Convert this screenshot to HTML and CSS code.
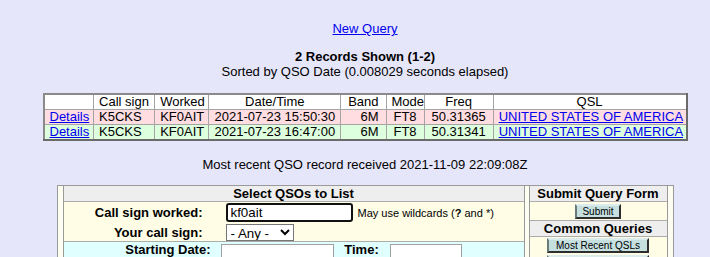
FILE: index.html
```html
<!DOCTYPE html>
<html lang="en">

<head>
    <title>QSL Query Results</title>

    <link rel="stylesheet" href="styles.css">
</head>

<body>
    <div class="page">
        <p class="new-query"><a href="#">New Query</a></p>

        <p class="summary">
            <b>2 Records Shown (1-2)</b><br>
            Sorted by QSO Date (0.008029 seconds elapsed)
        </p>

        <table class="results">
            <colgroup>
                <col class="c-details">
                <col class="c-call">
                <col class="c-worked">
                <col class="c-date">
                <col class="c-band">
                <col class="c-mode">
                <col class="c-freq">
                <col class="c-qsl">
            </colgroup>
            <tr class="head">
                <td></td>
                <td>Call sign</td>
                <td>Worked</td>
                <td class="center">Date/Time</td>
                <td class="right">Band</td>
                <td class="center">Mode</td>
                <td class="center">Freq</td>
                <td class="center">QSL</td>
            </tr>
            <tr class="odd">
                <td><a href="#">Details</a></td>
                <td>K5CKS</td>
                <td>KF0AIT</td>
                <td class="center">2021-07-23 15:50:30</td>
                <td class="right">6M</td>
                <td class="center">FT8</td>
                <td class="center">50.31365</td>
                <td><a href="#">UNITED STATES OF AMERICA</a></td>
            </tr>
            <tr class="even">
                <td><a href="#">Details</a></td>
                <td>K5CKS</td>
                <td>KF0AIT</td>
                <td class="center">2021-07-23 16:47:00</td>
                <td class="right">6M</td>
                <td class="center">FT8</td>
                <td class="center">50.31341</td>
                <td><a href="#">UNITED STATES OF AMERICA</a></td>
            </tr>
        </table>

        <p class="recent">Most recent QSO record received 2021-11-09 22:09:08Z</p>

        <form class="query" onsubmit="return false">
            <div class="panel main">
                <div class="panel-head">Select QSOs to List</div>
                <div class="fields">
                    <label class="lbl">Call sign worked:</label>
                    <div class="ctl">
                        <input type="text" class="call-input" value="kf0ait">
                        <span class="hint">May use wildcards (<b>?</b> and *)</span>
                    </div>
                    <label class="lbl">Your call sign:</label>
                    <div class="ctl">
                        <select class="mycall">
                            <option>- Any -</option>
                        </select>
                    </div>
                </div>
                <div class="dates">
                    <label class="lbl">Starting Date:</label>
                    <input type="text" class="date-input">
                    <label class="time-lbl">Time:</label>
                    <input type="text" class="time-input">
                    <span></span>
                </div>
            </div>

            <div class="panel side">
                <div class="panel-head">Submit Query Form</div>
                <div class="btn-row">
                    <button>Submit</button>
                </div>
                <div class="panel-head second">Common Queries</div>
                <div class="btn-row stack">
                    <button>Most Recent QSLs</button>
                    <button class="next"></button>
                </div>
            </div>
        </form>
    </div>
</body>
</html>
```

FILE: styles.css
```css
html,
body {
    margin: 0;
    padding: 0;
    overflow: hidden;
}

body {
    background-color: #e6e6fa;
    color: black;
    font-family: "Liberation Sans", Arial, sans-serif;
    font-size: 13px;
}

a {
    color: #0000ee;
}

.page {
    width: 690px;
    margin-left: 20px;
    text-align: center;
}

.new-query,
.summary,
.recent {
    line-height: 15px;
}

.new-query {
    margin: 21px 0 0 0;
}

.summary {
    margin: 13px 0 0 0;
}

.recent {
    margin: 16px 0 0 0;
}

/* results table */
.results {
    margin: 14px auto 0 auto;
    width: 645px;
    table-layout: fixed;
    border-collapse: collapse;
    border: 2px solid #8a8a8a;
    border-right-color: #6a6a6a;
    border-bottom-color: #6a6a6a;
    text-align: left;
    line-height: 14px;
}

.results td {
    border: 1px solid #a4a4a4;
    padding: 0 5px;
    white-space: nowrap;
    overflow: hidden;
}

.results .center {
    text-align: center;
}

.results .right {
    text-align: right;
    padding-right: 7px;
}

.c-details { width: 50px; }
.c-call { width: 61px; }
.c-worked { width: 54px; }
.c-date { width: 132px; }
.c-band { width: 45px; }
.c-mode { width: 38px; }
.c-freq { width: 69px; }
.c-qsl { width: 193px; }

.head { background-color: white; }
.odd { background-color: #ffdde0; }
.even { background-color: #ddffdd; }

/* query form */
.query {
    display: flex;
    gap: 4px;
    width: fit-content;
    margin: 13px auto 0 auto;
    padding: 0 5px;
    border: 1px solid #9a9a9a;
    background-color: #fdfdf2;
    text-align: left;
}

.panel {
    border-left: 1px solid #9a9a9a;
    border-right: 1px solid #9a9a9a;
    background-color: #fffde6;
}

.main {
    width: 460px;
}

.side {
    width: 137px;
}

.panel-head {
    background-color: #eeeeee;
    border-bottom: 1px solid #acacac;
    font-weight: bold;
    text-align: center;
    line-height: 15px;
}

.panel-head.second {
    border-top: 1px solid #acacac;
}

.fields {
    display: grid;
    grid-template-columns: 162px auto;
    row-gap: 2px;
    align-items: center;
    padding: 1px 0 0 0;
}

.lbl {
    font-weight: bold;
    text-align: right;
    padding-right: 23px;
}

.ctl {
    display: flex;
    align-items: center;
    gap: 5px;
}

.call-input {
    box-sizing: border-box;
    width: 127px;
    height: 19px;
    margin: 0;
    padding: 0 3px;
    border: 2px solid #111;
    border-radius: 3px;
    font-family: "Liberation Sans", Arial, sans-serif;
    font-size: 13.33px;
    outline: none;
}

.hint {
    font-size: 11px;
}

.mycall {
    box-sizing: border-box;
    width: 68px;
    height: 17px;
    margin: 0;
    padding: 0;
    border: 1px solid #767676;
    border-radius: 0;
    background-color: white;
    font-family: "Liberation Sans", Arial, sans-serif;
    font-size: 13.33px;
}

.dates {
    display: grid;
    grid-template-columns: 157px 113px 56px 72px 1fr;
    align-items: start;
    padding: 0 0 2px 0;
    border-top: 1px solid #acacac;
    background-color: #e0ffff;
    line-height: 15px;
}

.dates .lbl {
    padding-right: 10px;
}

.time-lbl {
    font-weight: bold;
    text-align: center;
}

.date-input,
.time-input {
    box-sizing: border-box;
    height: 20px;
    margin: 2px 0 0 0;
    border: 1px solid #a0a0a0;
    background-color: white;
}

.date-input { width: 113px; }
.time-input { width: 72px; }

.btn-row {
    text-align: center;
    padding: 1px 0;
}

.stack {
    display: flex;
    flex-direction: column;
    align-items: center;
    gap: 2px;
}

button {
    box-sizing: border-box;
    height: 15px;
    margin: 0;
    padding: 0 5px;
    font-family: "Liberation Sans", Arial, sans-serif;
    font-size: 10px;
    line-height: 11px;
    color: black;
    background-color: #c6e0e0;
    border: 2px solid #2e2e2e;
    border-top-color: #dcecec;
    border-left-color: #6a7a7a;
}

.stack button {
    width: 102px;
}
```
